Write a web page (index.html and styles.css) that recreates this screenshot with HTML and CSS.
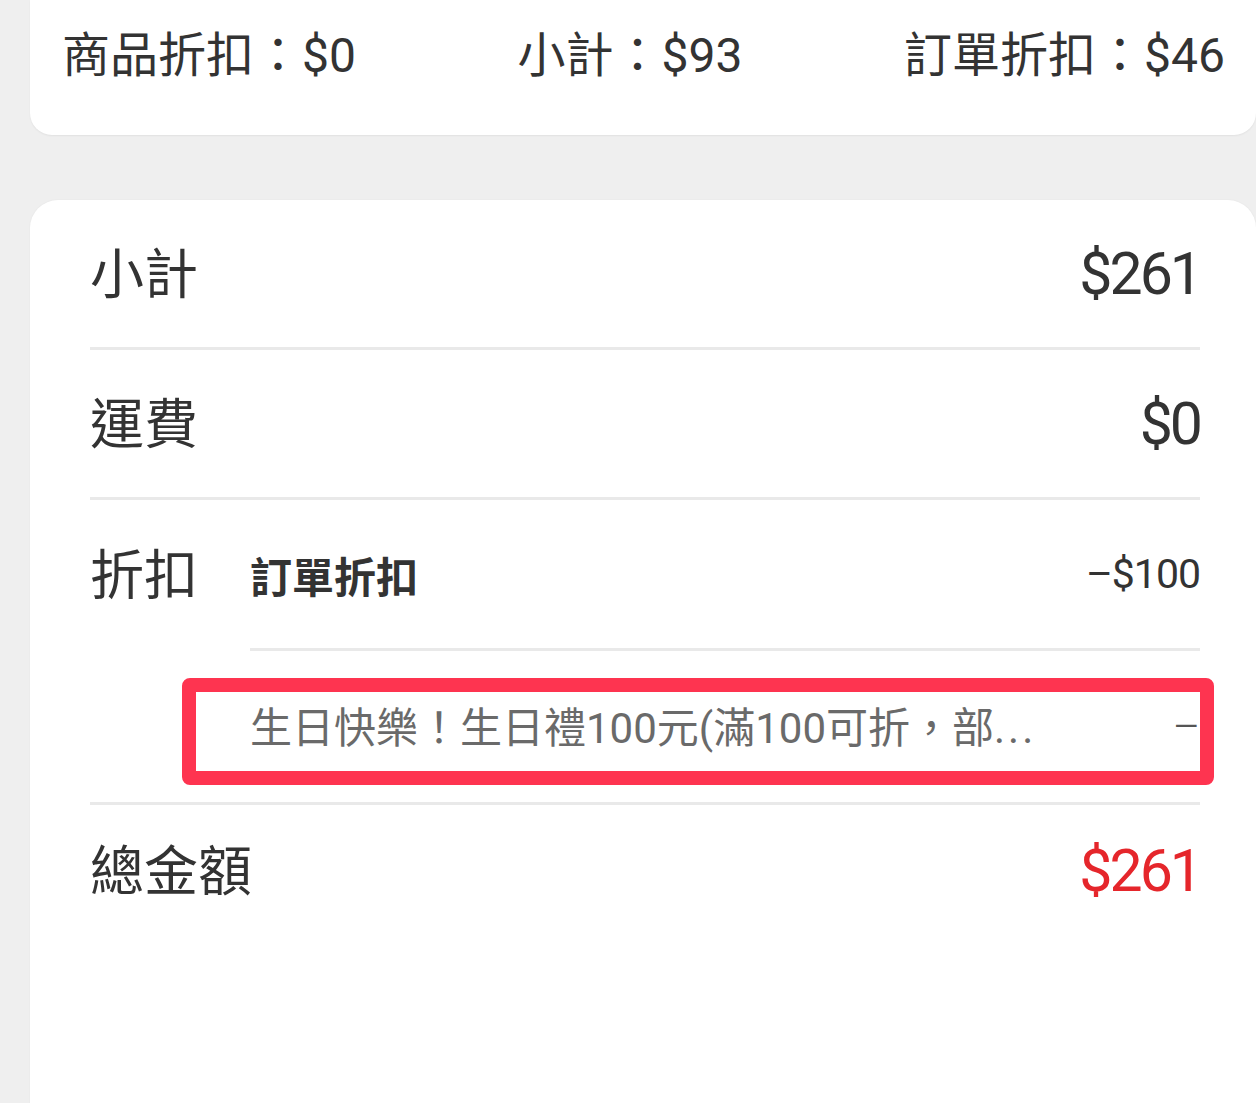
FILE: index.html
```html
<!DOCTYPE html>
<html lang="zh-Hant">
<head>
<meta charset="utf-8">
<title>訂單金額</title>
<link rel="stylesheet" href="styles.css">
</head>
<body>
<div class="page">
  <section class="summary-card">
    <div class="summary-item">商品折扣：$0</div>
    <div class="summary-item">小計：$93</div>
    <div class="summary-item">訂單折扣：$46</div>
  </section>
  <section class="detail-card">
    <div class="row">
      <span class="label">小計</span>
      <span class="amount">$261</span>
    </div>
    <div class="row">
      <span class="label">運費</span>
      <span class="amount">$0</span>
    </div>
    <div class="row discount">
      <div class="discount-label"><span class="label">折扣</span></div>
      <div class="discount-list">
        <div class="sub-row">
          <span class="sub-title">訂單折扣</span>
          <span class="sub-amount">–$100</span>
        </div>
        <div class="sub-row desc-row">
          <span class="desc">生日快樂！生日禮100元(滿100可折，部<span class="ellipsis">...</span></span>
          <span class="desc-amount">–</span>
          <span class="highlight"></span>
        </div>
      </div>
    </div>
    <div class="row total">
      <span class="label">總金額</span>
      <span class="amount red">$261</span>
    </div>
  </section>
</div>
</body>
</html>
```
FILE: styles.css
```css
html, body {
  margin: 0;
  padding: 0;
}
body {
  background: #efefef;
  color: #333333;
  font-family: "Noto Sans CJK TC", sans-serif;
  overflow: hidden;
}
.page {
  padding-left: 30px;
}
.summary-card {
  background: #ffffff;
  border-radius: 0 0 22px 22px;
  height: 135px;
  box-sizing: border-box;
  padding: 0 31px 23px 32px;
  display: flex;
  justify-content: space-between;
  align-items: center;
  box-shadow: 0 1px 2px rgba(0, 0, 0, 0.06);
}
.summary-item {
  font-family: "Roboto", "Noto Sans CJK TC", sans-serif;
  font-size: 48px;
  line-height: 72px;
  white-space: nowrap;
}
.detail-card {
  margin-top: 65px;
  background: #ffffff;
  border-radius: 28px 28px 0 0;
  padding: 0 56px 0 60px;
  min-height: 1000px;
  box-shadow: 0 0 2px rgba(0, 0, 0, 0.06);
}
.row {
  display: flex;
  justify-content: space-between;
  align-items: center;
  height: 147px;
  border-bottom: 3px solid #e9e9e9;
}
.label {
  font-size: 54px;
  line-height: 1.2;
  position: relative;
  top: -2px;
}
.amount {
  font-family: "Roboto", sans-serif;
  font-size: 59px;
  letter-spacing: -3px;
}
.amount.red {
  color: #e5262b;
}
.row.discount {
  height: auto;
  align-items: flex-start;
}
.discount-label {
  flex: none;
  width: 160px;
  height: 148px;
  display: flex;
  align-items: center;
}
.discount-list {
  flex: 1;
}
.sub-row {
  display: flex;
  justify-content: space-between;
  align-items: center;
  height: 148px;
  border-bottom: 3px solid #e9e9e9;
}
.sub-title {
  font-size: 42px;
  font-weight: 700;
}
.sub-amount {
  font-family: "Roboto", sans-serif;
  font-size: 41px;
  letter-spacing: -1px;
}
.desc-row {
  position: relative;
  height: 151px;
  border-bottom: none;
}
.desc {
  font-family: "Roboto", "Noto Sans CJK TC", sans-serif;
  font-size: 42px;
  color: #6a6a6a;
  white-space: nowrap;
  position: relative;
  top: -2px;
}
.ellipsis {
  letter-spacing: 3px;
}
.desc-amount {
  font-family: "Roboto", sans-serif;
  font-size: 42px;
  font-weight: 300;
  color: #555555;
}
.highlight {
  position: absolute;
  left: -68px;
  right: -14px;
  top: 27px;
  bottom: 17px;
  border: 14px solid #fe3450;
  border-radius: 8px;
  pointer-events: none;
}
.row.total {
  height: 130px;
  border-bottom: none;
}
```
